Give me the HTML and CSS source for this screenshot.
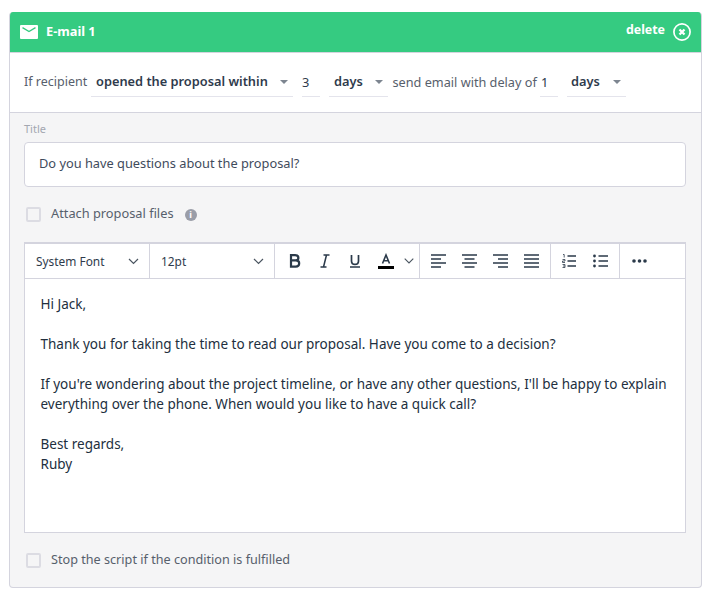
FILE: index.html
```html
<!DOCTYPE html>
<html lang="en">
<head>
<meta charset="utf-8">
<title>E-mail 1</title>
<link rel="stylesheet" href="styles.css">
</head>
<body>
<main class="card">
  <header class="head">
    <div class="head-left">
      <svg class="mail" width="18" height="14" viewBox="0 0 18 14"><path d="M1 0h16a1 1 0 0 1 1 1v12a1 1 0 0 1-1 1H1a1 1 0 0 1-1-1V1a1 1 0 0 1 1-1z" fill="#fff"/><path d="M2.5 2.6 9 6.6l6.500-4" fill="none" stroke="#35cb81" stroke-width="1.300"/></svg>
      <span class="head-title">E-mail 1</span>
    </div>
    <div class="head-right">
      <span class="delete">delete</span>
      <svg width="18" height="18" viewBox="0 0 18 18"><circle cx="9" cy="9" r="8.100" fill="none" stroke="#fff" stroke-width="1.700"/><path d="M6.500 6.500l5 5M11.500 6.500l-5 5" stroke="#fff" stroke-width="2.300" fill="none"/></svg>
    </div>
  </header>
  <section class="cond">
    <span class="lbl lbl-first">If recipient</span>
    <span class="sel sel-long"><b>opened the proposal within</b><i class="caret"></i></span>
    <span class="num num-3">3</span>
    <span class="sel sel-days"><b>days</b><i class="caret"></i></span>
    <span class="lbl lbl-send">send email with delay of</span>
    <span class="num num-1">1</span>
    <span class="sel sel-days2"><b>days</b><i class="caret"></i></span>
  </section>
  <section class="body">
    <div class="title-lbl">Title</div>
    <div class="input">Do you have questions about the proposal?</div>
    <div class="check attach">
      <span class="box"></span>
      <span class="check-text">Attach proposal files</span>
      <span class="info">i</span>
    </div>
    <div class="editor">
      <div class="toolbar">
        <div class="group g-font"><span>System Font</span><svg class="chev" width="11" height="7" viewBox="0 0 11 7"><path d="M1 1l4.500 4.500L10 1" fill="none" stroke="#4a5560" stroke-width="1.200"/></svg></div>
        <div class="group g-size"><span>12pt</span><svg class="chev" width="11" height="7" viewBox="0 0 11 7"><path d="M1 1l4.500 4.500L10 1" fill="none" stroke="#4a5560" stroke-width="1.200"/></svg></div>
        <div class="group g-style">
          <svg class="ic-b" width="12" height="14" viewBox="0 0 12 14"><path d="M2 1.200h4.200c2 0 3.200 1 3.200 2.700 0 1.500-1 2.500-3 2.500H2zM2 6.400h4.800c2.200 0 3.400 1.100 3.400 2.900 0 1.900-1.300 3.300-3.500 3.300H2z" fill="none" stroke="#2b3a4a" stroke-width="2.200"/></svg>
          <svg class="ic-i" width="10" height="14" viewBox="0 0 10 14"><path d="M3.500 1h6M.5 13h6M6.500 1l-3 12" fill="none" stroke="#2b3a4a" stroke-width="1.500"/></svg>
          <svg class="ic-u" width="12" height="14" viewBox="0 0 12 14"><path d="M2.500 1v6c0 2.300 1.300 3.400 3.500 3.400S9.500 9.300 9.500 7V1M1 13h10" fill="none" stroke="#2b3a4a" stroke-width="1.700"/></svg>
          <svg class="ic-a" width="18" height="16" viewBox="0 0 18 16"><path d="M5.500 10.500 9 2l3.500 8.500M6.700 7.800h4.600" fill="none" stroke="#2b3a4a" stroke-width="1.600"/><rect x="1" y="13" width="16" height="3" fill="#000"/></svg>
          <svg class="ic-chev" width="10" height="6" viewBox="0 0 10 6"><path d="M.7.700 5 5 9.300.700" fill="none" stroke="#4a5560" stroke-width="1.100"/></svg>
        </div>
        <div class="group g-align">
          <svg width="15" height="14" viewBox="0 0 15 14"><path d="M0 1h15M0 5h10M0 9h15M0 13h10" stroke="#2b3a4a" stroke-width="1.700"/></svg>
          <svg width="15" height="14" viewBox="0 0 15 14"><path d="M0 1h15M2.500 5h10M0 9h15M2.500 13h10" stroke="#2b3a4a" stroke-width="1.700"/></svg>
          <svg width="15" height="14" viewBox="0 0 15 14"><path d="M0 1h15M5 5h10M0 9h15M5 13h10" stroke="#2b3a4a" stroke-width="1.700"/></svg>
          <svg width="15" height="14" viewBox="0 0 15 14"><path d="M0 1h15M0 5h15M0 9h15M0 13h15" stroke="#2b3a4a" stroke-width="1.700"/></svg>
        </div>
        <div class="group g-list">
          <svg width="14" height="14" viewBox="0 0 14 14"><path d="M5.500 2h8.500M5.500 7h8.500M5.500 12h8.500" stroke="#2b3a4a" stroke-width="1.600"/><path d="M1 .5h1.200v3M.5 5.500h2.500v1.500H.5v1.500h2.500M.5 10.500h2.500v3H.5M1 12h2" fill="none" stroke="#2b3a4a" stroke-width=".8"/></svg>
          <svg width="15" height="14" viewBox="0 0 15 14"><path d="M5.500 2H15M5.500 7H15M5.500 12H15" stroke="#2b3a4a" stroke-width="1.600"/><circle cx="1.500" cy="2" r="1.400" fill="#2b3a4a"/><circle cx="1.500" cy="7" r="1.400" fill="#2b3a4a"/><circle cx="1.500" cy="12" r="1.400" fill="#2b3a4a"/></svg>
        </div>
        <div class="group g-more">
          <svg width="15" height="4" viewBox="0 0 15 4"><circle cx="2" cy="2" r="1.800" fill="#2b3a4a"/><circle cx="7.500" cy="2" r="1.800" fill="#2b3a4a"/><circle cx="13" cy="2" r="1.800" fill="#2b3a4a"/></svg>
        </div>
      </div>
      <div class="content">
        <p>Hi Jack,</p>
        <p class="blank">&nbsp;</p>
        <p>Thank you for taking the time to read our proposal. Have you come to a decision?</p>
        <p class="blank">&nbsp;</p>
        <p>If you're wondering about the project timeline, or have any other questions, I'll be happy to explain everything over the phone. When would you like to have a quick call?</p>
        <p class="blank">&nbsp;</p>
        <p>Best regards,</p>
        <p>Ruby</p>
      </div>
    </div>
    <div class="check stop">
      <span class="box"></span>
      <span class="check-text">Stop the script if the condition is fulfilled</span>
    </div>
  </section>
</main>
</body>
</html>
```
FILE: styles.css
```css
* { box-sizing: border-box; }
html, body { margin: 0; padding: 0; background: #fff; }
body {
  padding: 12px 9px 0 9px;
  width: 712px;
  height: 599px;
  overflow: hidden;
  font-family: "Noto Sans", "Open Sans", sans-serif;
  font-size: 12.800px;
  color: #4b5563;
}
.card {
  width: 693px;
  height: 576px;
  border-radius: 4px;
  border: 1px solid #d4d4de;
  border-top: 0;
  background: #f5f5f6;
  overflow: hidden;
}
.head {
  margin: 0 -1px;
  height: 40px;
  padding: 0 11px 0 11px;
  background: #35cb81;
  color: #fff;
  display: flex;
  justify-content: space-between;
  align-items: center;
  font-weight: 700;
}
.head-left { display: flex; align-items: center; gap: 8px; }
.head-title { font-size: 12.800px; margin-bottom: 2px; }
.head-right { display: flex; align-items: center; gap: 8px; }
.delete { font-size: 12.400px; position: relative; top: -3px; }
.cond {
  height: 61px;
  background: #fff;
  border-top: 1px solid #d4d4de;
  border-bottom: 1px solid #d4d4de;
  padding: 0 0 0 14px;
  display: flex;
  align-items: center;
}
.lbl { color: #57606c; white-space: nowrap; margin-bottom: 2px; }
.sel, .num {
  height: 28px;
  border-bottom: 1px solid #e4e4ec;
  display: flex;
  align-items: center;
  color: #2f3b4c;
}
.sel b { font-weight: 600; white-space: nowrap; margin-bottom: 2px; }
.caret {
  width: 0;
  height: 0;
  border-left: 4px solid transparent;
  border-right: 4px solid transparent;
  border-top: 4px solid #7d8590;
  margin-left: auto;
}
.lbl-first { width: 67px; font-size: 12.500px; }
.sel-long { width: 202px; padding: 0 5px; }
.num-3 { width: 18px; margin-left: 9px; padding-left: 0; }
.sel-days { width: 59px; margin-left: 9px; padding: 0 5px 0 5px; }
.lbl-send { margin-left: 4.500px; width: 147.500px; font-size: 12.700px; }
.num-1 { width: 18px; margin-left: 0; padding-left: 1px; }
.sel-days2 { width: 59px; margin-left: 9px; padding: 0 5px 0 4px; }
.body { padding: 0 15px 0 14px; }
.title-lbl { height: 29px; padding-top: 8px; font-size: 11px; line-height: 16px; color: #a3a7b0; }
.input {
  height: 45px;
  background: #fff;
  border: 1px solid #d4d4de;
  border-radius: 4px;
  padding: 0 14px 4px;
  display: flex;
  align-items: center;
  color: #3f4b5c;
}
.check { display: flex; align-items: center; }
.attach { height: 55px; }
.stop { height: 55px; }
.box {
  width: 15px;
  height: 15px;
  margin-left: 2px;
  background: #f5f5f6;
  border: 2px solid #dcdce3;
  border-radius: 2px;
}
.check-text { margin-left: 10px; margin-bottom: 4px; color: #57606c; }
.stop .check-text { font-size: 12.650px; }
.info {
  margin-left: 11px;
  width: 12px;
  height: 12px;
  border-radius: 50%;
  background: #9a9da8;
  color: #fff;
  font-size: 9px;
  line-height: 12px;
  text-align: center;
  font-weight: 700;
}
.editor {
  height: 291px;
  background: #fff;
  border: 1px solid #d4d4de;
  border-top-width: 2px;
}
.toolbar {
  height: 35px;
  display: flex;
  border-bottom: 1px solid #d4d4de;
}
.group {
  display: flex;
  align-items: center;
  border-right: 1px solid #d4d4de;
  color: #2f3b4c;
  font-size: 11.900px;
}
.g-font { width: 125px; padding: 0 10px 0 11px; justify-content: space-between; }
.g-size { width: 125px; padding: 0 10px 0 11px; justify-content: space-between; }
.g-style { width: 145px; padding-left: 13.500px; }
.ic-i { margin-left: 19px; }
.ic-u { margin-left: 19px; }
.ic-a { margin-left: 16px; }
.ic-chev { margin-left: 9px; }
.g-align { width: 131px; padding-left: 11px; gap: 16px; }
.g-list { width: 69px; padding-left: 11px; gap: 17px; }
.g-more { flex: 1; padding-left: 12px; border-right: 0; }
.content { padding: 15px 16px 0 15.500px; font-size: 13.500px; line-height: 20px; color: #222f3e; }
.content p { margin: 0; }
```
